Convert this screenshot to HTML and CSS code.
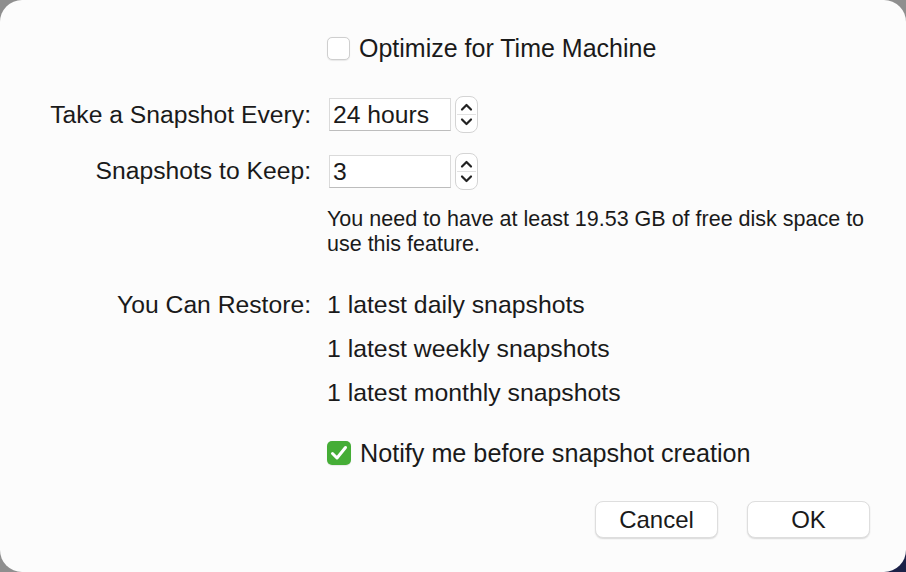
FILE: index.html
```html
<!DOCTYPE html>
<html>
<head>
<meta charset="utf-8">
<link rel="stylesheet" href="styles.css">
</head>
<body>
<div class="window">
  <div class="row row-opt">
    <span class="cb"></span>
    <span class="opt-label">Optimize for Time Machine</span>
  </div>

  <div class="row row-every">
    <div class="label">Take a Snapshot Every:</div>
    <div class="field">24 hours</div>
    <div class="stepper">
      <svg width="23" height="37" viewBox="0 0 23 37">
        <path d="M7 13.5 L11.5 9 L16 13.5" fill="none" stroke="#222" stroke-width="2.2" stroke-linecap="round" stroke-linejoin="round"/>
        <line x1="2" y1="18.5" x2="21" y2="18.5" stroke="#e2e2e2" stroke-width="1"/>
        <path d="M7 23.5 L11.5 28 L16 23.5" fill="none" stroke="#222" stroke-width="2.2" stroke-linecap="round" stroke-linejoin="round"/>
      </svg>
    </div>
  </div>

  <div class="row row-keep">
    <div class="label">Snapshots to Keep:</div>
    <div class="field">3</div>
    <div class="stepper">
      <svg width="23" height="37" viewBox="0 0 23 37">
        <path d="M7 13.5 L11.5 9 L16 13.5" fill="none" stroke="#222" stroke-width="2.2" stroke-linecap="round" stroke-linejoin="round"/>
        <line x1="2" y1="18.5" x2="21" y2="18.5" stroke="#e2e2e2" stroke-width="1"/>
        <path d="M7 23.5 L11.5 28 L16 23.5" fill="none" stroke="#222" stroke-width="2.2" stroke-linecap="round" stroke-linejoin="round"/>
      </svg>
    </div>
  </div>

  <div class="info">You need to have at least 19.53 GB of free disk space to<br>use this feature.</div>

  <div class="row row-restore">
    <div class="label label-top">You Can Restore:</div>
    <div class="restore-list">
      <div class="restore-item">1 latest daily snapshots</div>
      <div class="restore-item">1 latest weekly snapshots</div>
      <div class="restore-item">1 latest monthly snapshots</div>
    </div>
  </div>

  <div class="row row-notify">
    <span class="cb cb-on">
      <svg width="24" height="24" viewBox="0 0 24 24">
        <path d="M5.5 12.5 L10 17 L18.5 6.5" fill="none" stroke="#fff" stroke-width="3" stroke-linecap="round" stroke-linejoin="round"/>
      </svg>
    </span>
    <span class="notify-label">Notify me before snapshot creation</span>
  </div>

  <div class="buttons">
    <div class="btn">Cancel</div>
    <div class="btn">OK</div>
  </div>
</div>
</body>
</html>
```

FILE: styles.css
```css
html, body {
  margin: 0;
  padding: 0;
}

body {
  width: 906px;
  height: 572px;
  overflow: hidden;
  background: radial-gradient(circle at 100% 100%, #1b2148 0 26px, #8f8f8f 34px);
  font-family: "Liberation Sans", Arial, sans-serif;
  color: #1a1a1a;
}

.window {
  width: 906px;
  height: 572px;
  box-sizing: border-box;
  background: #fcfcfc;
  border-radius: 22px;
  display: flex;
  flex-direction: column;
  overflow: hidden;
}

.row {
  display: flex;
  align-items: center;
}

.label {
  width: 311px;
  text-align: right;
  margin-right: 16px;
  font-size: 24.7px;
  flex: none;
}

.row-opt {
  margin-top: 35px;
  height: 26px;
  padding-left: 327px;
}

.cb {
  width: 23px;
  height: 23px;
  box-sizing: border-box;
  border: 1px solid #cfcfcf;
  border-radius: 5px;
  background: #ffffff;
  box-shadow: 0 0.5px 1px rgba(0, 0, 0, 0.08);
  flex: none;
  display: flex;
}

.cb-on {
  width: 24px;
  height: 24px;
  border: none;
  background: #45ad36;
}

.opt-label {
  margin-left: 9px;
  font-size: 25px;
}

.row-every {
  margin-top: 35px;
  height: 37px;
}

.row-keep {
  margin-top: 20px;
  height: 36px;
}

.field {
  width: 122px;
  height: 33px;
  box-sizing: border-box;
  margin-left: 2px;
  border: 1px solid #dadada;
  border-bottom-color: #bdbdbd;
  background: #ffffff;
  font-size: 24.7px;
  line-height: 31px;
  padding-left: 3px;
}

.stepper {
  margin-left: 4px;
  width: 23px;
  height: 37px;
  box-sizing: border-box;
  border: 1px solid #d4d4d4;
  border-radius: 8px;
  background: #ffffff;
  display: flex;
  align-items: center;
  justify-content: center;
  overflow: hidden;
}

.stepper svg {
  flex: none;
}

.info {
  margin-top: 18px;
  padding-left: 327px;
  font-size: 21.5px;
  line-height: 25px;
}

.row-restore {
  margin-top: 26px;
  align-items: flex-start;
}

.label-top {
  line-height: 44px;
}

.restore-item {
  font-size: 24.8px;
  line-height: 44px;
}

.row-notify {
  margin-top: 25px;
  height: 26px;
  padding-left: 327px;
}

.notify-label {
  margin-left: 9px;
  font-size: 25.2px;
}

.buttons {
  margin-top: 35px;
  display: flex;
  justify-content: flex-end;
  gap: 29px;
  padding-right: 36px;
}

.btn {
  width: 123px;
  height: 37px;
  box-sizing: border-box;
  border-radius: 8px;
  background: #ffffff;
  border: 1px solid #dedede;
  box-shadow: 0 1px 1.5px rgba(0, 0, 0, 0.14);
  font-size: 24px;
  line-height: 35px;
  text-align: center;
}
```
